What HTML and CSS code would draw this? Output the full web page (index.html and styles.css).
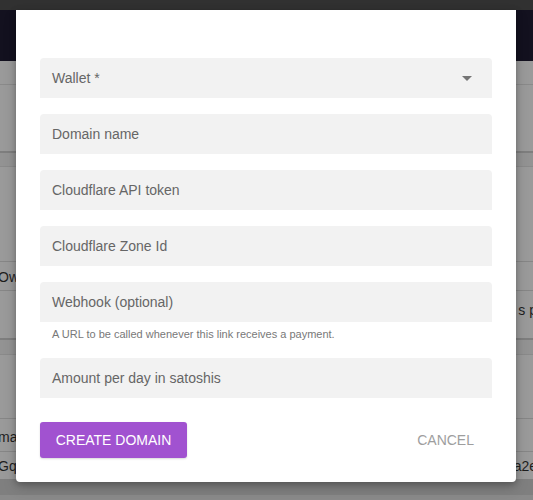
FILE: index.html
```html
<!DOCTYPE html>
<html>
<head>
<meta charset="utf-8">
<link rel="stylesheet" href="styles.css">
</head>
<body>
<div class="page">
  <div class="topbar"></div>
  <div class="header"></div>
  <div class="content">
    <div class="strip s1"></div>
    <div class="card c1"></div>
    <div class="gap g1"></div>
    <div class="card c2">
      <div class="crow r1"><span class="txt left">Ow</span></div>
      <div class="crow r2"><span class="txt right">s p</span></div>
    </div>
    <div class="gap g2"></div>
    <div class="card c3">
      <div class="crow r3"><span class="txt left">main</span></div>
      <div class="crow r4"><span class="txt left">GqV</span><span class="txt right">a2e</span></div>
    </div>
    <div class="foot"></div>
  </div>
</div>

<div class="modal">
  <div class="form">
    <div class="field select">
      <span class="label">Wallet *</span>
      <span class="arrow"></span>
    </div>
    <div class="field"><span class="label">Domain name</span></div>
    <div class="field"><span class="label">Cloudflare API token</span></div>
    <div class="field"><span class="label">Cloudflare Zone Id</span></div>
    <div class="fieldwrap">
      <div class="field"><span class="label">Webhook (optional)</span></div>
      <div class="hint">A URL to be called whenever this link receives a payment.</div>
    </div>
    <div class="field"><span class="label">Amount per day in satoshis</span></div>
  </div>
  <div class="actions">
    <button class="btn primary">CREATE DOMAIN</button>
    <button class="btn flat">CANCEL</button>
  </div>
</div>
</body>
</html>
```

FILE: styles.css
```css
* { box-sizing: border-box; }
html, body { margin: 0; padding: 0; }
body {
  width: 533px;
  height: 500px;
  overflow: hidden;
  font-family: "Liberation Sans", Arial, sans-serif;
  background: #8c8c8c;
  position: relative;
}
.page { display: flex; flex-direction: column; height: 500px; }
.topbar { height: 10px; background: #313131; }
.header { height: 51px; background: #13111f; }
.content { display: flex; flex-direction: column; flex: 1; }
.strip { height: 24px; background: #9a9a9a; border-bottom: 1px solid #8a8a8a; }
.card { background: #9a9a9a; }
.c1 { height: 68px; border-bottom: 2px solid #7e7e7e; }
.gap { background: #939393; }
.g1 { height: 14px; border-bottom: 1px solid #8a8a8a; }
.c2 { height: 173px; display: flex; flex-direction: column; justify-content: flex-end; border-bottom: 2px solid #7e7e7e; }
.g2 { height: 15px; border-bottom: 1px solid #8a8a8a; }
.c3 { height: 124px; display: flex; flex-direction: column; justify-content: flex-end; }
.crow { position: relative; border-top: 1px solid #868686; }
.r1 { height: 29px; }
.r2 { height: 48px; }
.r3 { height: 33px; }
.r4 { height: 28px; }
.txt { position: absolute; font-size: 14px; color: #1e1e1e; top: 50%; transform: translateY(-50%); }
.left { left: -2px; }
.right { right: -4px; }
.r1 .left { top: 55%; }
.r2 .right { top: 40%; }
.r3 .left { top: 55%; }
.foot { flex: 1; background: #7f7f7f; border-bottom: 5px solid #8a8a8a; }

.modal {
  position: absolute;
  left: 16px;
  top: 10px;
  width: 500px;
  height: 472px;
  background: #fff;
  border-radius: 0 0 4px 4px;
  box-shadow: 0 2px 6px rgba(0,0,0,0.25), 0 6px 14px rgba(0,0,0,0.15);
  padding: 48px 24px 24px;
  display: flex;
  flex-direction: column;
}
.form { display: flex; flex-direction: column; gap: 16px; }
.field {
  height: 40px;
  background: #f2f2f2;
  border-radius: 4px 4px 0 0;
  display: flex;
  align-items: center;
  padding: 0 12px;
  position: relative;
}
.label { font-size: 14px; color: #666; }
.arrow {
  position: absolute;
  right: 20px;
  top: 18px;
  width: 0;
  height: 0;
  border-left: 5px solid transparent;
  border-right: 5px solid transparent;
  border-top: 5px solid #757575;
}
.fieldwrap { display: flex; flex-direction: column; }
.hint { height: 20px; font-size: 11px; color: #787878; padding: 6px 12px 0; }
.actions {
  margin-top: 24px;
  display: flex;
  justify-content: space-between;
  align-items: center;
}
.btn {
  font-family: "Liberation Sans", Arial, sans-serif;
  font-size: 14px;
  height: 36px;
  border: none;
  border-radius: 3px;
  padding: 0 16px;
  cursor: pointer;
  background: transparent;
}
.primary { background: #a152d0; color: #fff; width: 147px; padding: 0; box-shadow: 0 1px 2px rgba(0,0,0,0.15); }
.flat { color: #9e9e9e; margin-right: 2px; }
```
